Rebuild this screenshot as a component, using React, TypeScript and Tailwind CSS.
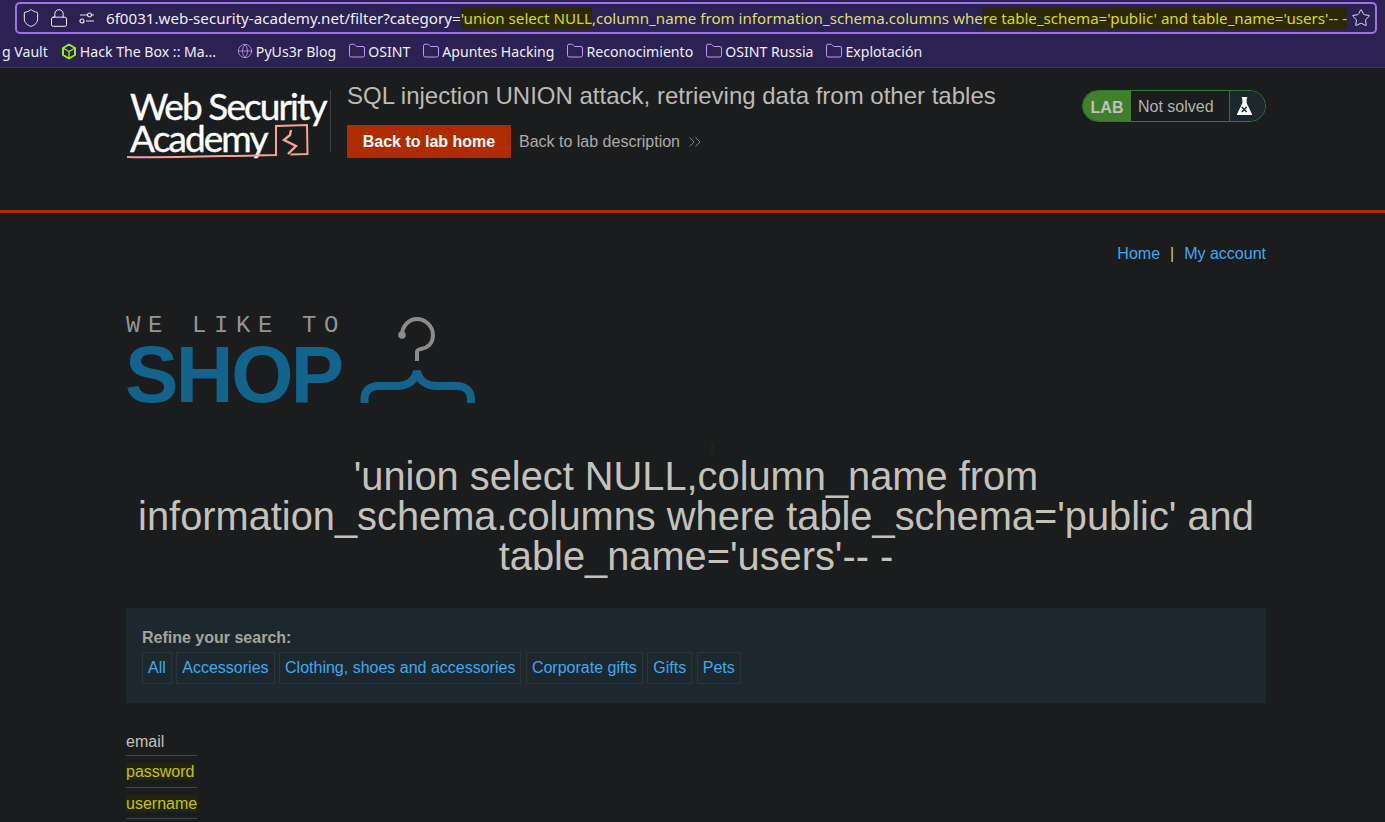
import { Shield, Lock, Star, Folder, Globe, ChevronsRight } from "lucide-react";

const folders = ["OSINT", "Apuntes Hacking", "Reconocimiento", "OSINT Russia", "Explotación"];
const categories = ["All", "Accessories", "Clothing, shoes and accessories", "Corporate gifts", "Gifts", "Pets"];

function PermissionsIcon() {
  return (
    <svg width="16" height="16" viewBox="0 0 16 16" fill="none" stroke="#e8e6ef" strokeWidth="1.2">
      <circle cx="10.5" cy="5" r="2" />
      <circle cx="3" cy="11" r="2" />
      <path d="M1 5h7M7 11h8M13 5h2" />
    </svg>
  );
}

function HtbIcon() {
  return (
    <svg width="16" height="17" viewBox="0 0 16 17" fill="none" stroke="#9fef00" strokeWidth="2" strokeLinejoin="round">
      <path d="M8 1.5l6 3.5v7l-6 3.500L2 12V5z" />
      <path d="M2 5l6 3.500L14 5M8 8.500v7" strokeWidth="1.4" />
    </svg>
  );
}

function AcademyLogo() {
  return (
    <div className="relative w-[205px] h-[62px] border-r border-[#3a3c3e] shrink-0">
      <div className="font-['Lato',sans-serif] text-[37px] leading-[32px] tracking-[-1.9px] text-white [-webkit-text-stroke:0.4px_white] whitespace-nowrap pl-[4px]">
        Web Security
        <br />
        Academy
      </div>
      <svg className="absolute left-0 top-0 overflow-visible" width="204" height="72" viewBox="0 0 204 72" fill="none" stroke="#f5a58f" strokeWidth="2">
        <path d="M1 67c30 1 90-1 149-2V36l31-1 .5 29-17 .5" />
        <path d="M165 40l-1 5-6 5 12 6-8 8" strokeWidth="2.400" />
      </svg>
    </div>
  );
}

function Flask() {
  return (
    <svg width="17" height="20" viewBox="0 0 16 20" preserveAspectRatio="none">
      <path d="M5.500 1h5v1.500H10V7l5 11v1H1v-1L6 7V2.500h-.5z" fill="#ffffff" />
      <path d="M5.500 11l4.500 5M10 11l-4.500 5" stroke="#1d282e" strokeWidth="1.300" />
    </svg>
  );
}

function ShopLogo() {
  return (
    <div className="flex items-start h-[92px]">
      <div className="flex flex-col w-[231px]">
        <div className="font-['Liberation_Mono',monospace] text-[24px] leading-[22px] tracking-[7.6px] text-[#949494] whitespace-nowrap pt-[1px]">
          WE LIKE TO
        </div>
        <div className="font-['Liberation_Sans',sans-serif] font-bold text-[80px] leading-[60px] tracking-[-2.5px] text-[#12648c] mt-[8px] -ml-[1px]">
          SHOP
        </div>
      </div>
      <svg width="122" height="92" viewBox="0 0 122 92" fill="none">
        <path d="M45 21c0-9 7-16 15-16s16 7 16 16-6 13-12 14c-3 .5-4 1-4 3v9" stroke="#8c8c8c" strokeWidth="4" />
        <circle cx="45" cy="21" r="3.800" fill="#8c8c8c" />
        <path d="M7.500 89v-4c0-8 5-13 14-13h18c12 0 19-6 20.500-15 1.500 9 8.500 15 20.500 15h19c9 0 14.500 5 14.500 13v4" stroke="#12648c" strokeWidth="8" />
      </svg>
    </div>
  );
}

export default function App() {
  return (
    <div className="relative h-screen overflow-hidden bg-[#1a1c1e] font-['Liberation_Sans',sans-serif] text-[#c5c2bc]">
      {/* browser chrome */}
      <div className="h-[68px] bg-[#2b2152] border-b border-[#3b3360] font-['Noto_Sans',sans-serif] text-[14.1px] text-[#f0eef5]">
        <div className="pt-[2px] pl-[15px] pr-[8px]">
          <div className="h-[32px] border-2 border-[#9f72ec] rounded-[5px] bg-[#2b2152] flex items-center pl-[4px] pr-[4px] whitespace-nowrap overflow-hidden text-[15.13px]">
            <Shield size={20} strokeWidth={1.2} className="shrink-0" />
            <Lock size={20} strokeWidth={1.2} className="ml-[8px] shrink-0" />
            <span className="ml-[10px] shrink-0">
              <PermissionsIcon />
            </span>
            <span className="ml-[11px]">6f0031.web-security-academy.net/filter?category=</span>
            <span className="text-[#dcdc00] bg-[#2c2806]">'union select NULL</span>
            <span className="text-[#dede70]">,column_name from information_schema.columns whe</span>
            <span className="text-[#dcdc00] bg-[#2c2806]">re table_schema='public' and table_name='users'-- -</span>
            <Star size={20} strokeWidth={1.1} className="ml-auto shrink-0" />
          </div>
        </div>
        <div className="flex items-center h-[35px] pl-[2px] whitespace-nowrap overflow-hidden">
          <span>g Vault</span>
          <span className="ml-[13px] flex items-center gap-[3px]">
            <HtbIcon />
            <span className="w-[144px]">Hack The Box :: Ma...</span>
          </span>
          <span className="ml-[13px] flex items-center gap-[3px]">
            <Globe size={16} strokeWidth={1.2} className="text-[#c79bf7]" />
            PyUs3r Blog
          </span>
          {folders.map((name) => (
            <span key={name} className="ml-[13px] flex items-center gap-[3px]">
              <Folder size={18} strokeWidth={1.3} className="-mx-px text-[#c79bf7]" />
              {name}
            </span>
          ))}
        </div>
      </div>

      {/* lab banner */}
      <div className="h-[145px] border-b-[3px] border-[#a82c00]">
        <div className="w-[1140px] ml-[126px] flex pt-[22px]">
          <AcademyLogo />
          <div className="ml-[16px]">
            <h2 className="text-[24px] leading-[28px] text-[#bdbab4] whitespace-nowrap -mt-[8px]">
              SQL injection UNION attack, retrieving data from other tables
            </h2>
            <div className="flex items-center mt-[15px]">
              <span className="h-[33px] w-[164px] bg-[#ae2c00] text-white font-bold text-[16px] flex items-center justify-center">
                Back to lab home
              </span>
              <span className="ml-[8px] text-[16px] text-[#aeaba5]">Back to lab description</span>
              <ChevronsRight size={20} strokeWidth={0.9} className="ml-[5px] text-[#aeaba5]" />
            </div>
          </div>
          <div className="ml-auto h-[32px] w-[184px] border border-[#2f7a2f] rounded-full flex overflow-hidden">
            <span className="w-[48px] bg-[#3f7f2d] font-bold text-[16px] text-[#c2c0b8] flex items-center justify-center pt-[3px]">
              LAB
            </span>
            <span className="flex-1 border-r border-[#2f7a2f] text-[16px] text-[#b5b2ac] flex items-center pl-[7px] pt-[1px]">
              Not solved
            </span>
            <span className="w-[35px] bg-[#1d282e] flex items-center pl-[6px]">
              <Flask />
            </span>
          </div>
        </div>
      </div>

      <div className="w-[1140px] ml-[126px]">
        <div className="flex justify-end items-center gap-[10px] h-[20px] mt-[31px] text-[16px]">
          <span className="text-[#3fa9ee]">Home</span>
          <span>|</span>
          <span className="text-[#3fa9ee]">My account</span>
        </div>

        <div className="mt-[50px]">
          <ShopLogo />
        </div>

        <h1 className="mt-[50px] text-[39.8px] leading-[40px] text-center text-[#c5c2bc]">
          'union select NULL,column_name from information_schema.columns where table_schema='public' and table_name='users'-- -
        </h1>

        <section className="mt-[32px] h-[95px] bg-[#1d282e] px-[16px] pt-[21px]">
          <div className="font-bold text-[16px] leading-[18px] text-[#a8a49c]">Refine your search:</div>
          <div className="flex gap-[4.500px] mt-[5px]">
            {categories.map((name) => (
              <span key={name} className="h-[32px] px-[5px] border border-[#2b3336] text-[16px] text-[#3fa9ee] flex items-center">
                {name}
              </span>
            ))}
          </div>
        </section>

        <table className="mt-[21px] text-[16px]">
          <tbody>
            <tr className="border-b border-[#45474a] h-[31px]">
              <td className="pt-[6px]">email</td>
            </tr>
            <tr className="border-b border-[#45474a] h-[32px]">
              <td className="pt-[2px] text-[#c4c400]"><span className="bg-[#24240c]">password</span></td>
            </tr>
            <tr className="border-b border-[#45474a] h-[31px]">
              <td className="pt-[2px] text-[#c4c400]"><span className="bg-[#24240c]">username</span></td>
            </tr>
          </tbody>
        </table>
      </div>

      {/* stray highlight speck */}
      <div className="absolute left-[711px] top-[443px] w-[3px] h-[11px] bg-[#212510]" />
    </div>
  );
}
